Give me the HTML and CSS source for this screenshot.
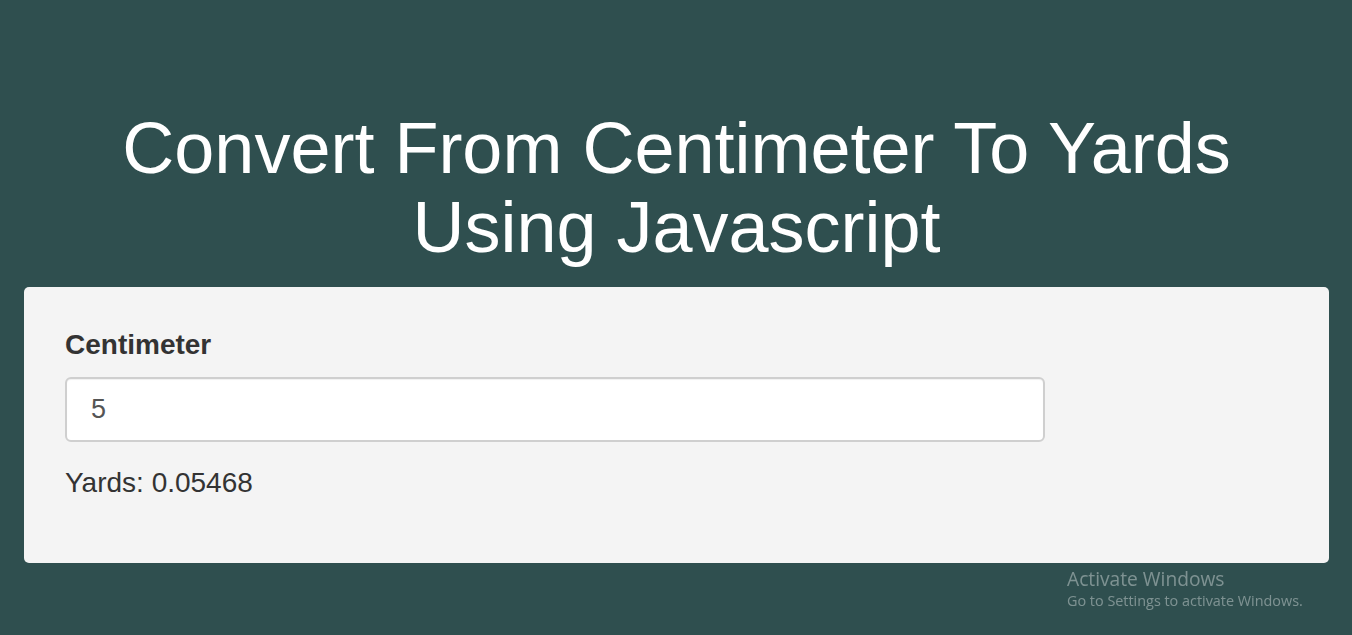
FILE: index.html
```html
<!DOCTYPE html>
<html lang="en">
<head>
<meta charset="utf-8">
<title>Convert From Centimeter To Yards Using Javascript</title>
<link rel="stylesheet" href="styles.css">
</head>
<body>
<div class="page">
  <h1 class="title">Convert From Centimeter To Yards<br>Using Javascript</h1>
  <div class="card">
    <label class="label" for="cm">Centimeter</label>
    <input class="field" id="cm" type="text" value="5">
    <p class="result">Yards: <span>0.05468</span></p>
  </div>
</div>
<div class="watermark">
  <div class="wm-title">Activate Windows</div>
  <div class="wm-sub">Go to Settings to activate Windows.</div>
</div>
</body>
</html>
```
FILE: styles.css
```css
html, body {
  margin: 0;
  padding: 0;
}
body {
  background: #2f4f4f;
  font-family: "Liberation Sans", Arial, sans-serif;
  color: #333;
  height: 635px;
  overflow: hidden;
}
.page {
  padding: 109px 23px 0 24px;
}
.title {
  margin: 0 0 20px;
  color: #fff;
  font-weight: normal;
  font-size: 72px;
  line-height: 79px;
  text-align: center;
}
.card {
  background: #f4f4f4;
  border-radius: 5px;
  padding: 42px 41px 64px;
  display: flex;
  flex-direction: column;
  align-items: flex-start;
}
.label {
  font-weight: bold;
  font-size: 28px;
  line-height: 32px;
  color: #333;
}
.field {
  margin-top: 16px;
  width: 980px;
  height: 65px;
  box-sizing: border-box;
  border: 2px solid #cfcfcf;
  border-radius: 6px;
  background: #fff;
  padding: 0 24px;
  font-family: "Liberation Sans", Arial, sans-serif;
  font-size: 27px;
  color: #555;
  outline: none;
  box-shadow: inset 0 1px 1px rgba(0,0,0,0.06);
}
.result {
  margin: 25px 0 0;
  font-size: 28px;
  line-height: 32px;
  color: #333;
}
.watermark {
  position: fixed;
  left: 1067px;
  top: 567px;
  color: rgba(255,255,255,0.38);
  font-family: "Open Sans", "Noto Sans", sans-serif;
}
.wm-title {
  font-size: 19.2px;
  line-height: 24px;
}
.wm-sub {
  font-size: 14.4px;
  line-height: 20px;
}
```
